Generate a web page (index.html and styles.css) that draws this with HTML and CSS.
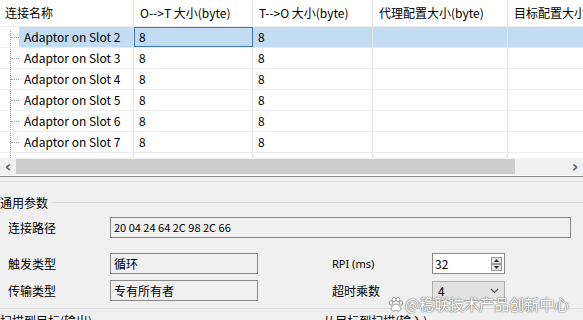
FILE: index.html
```html
<!DOCTYPE html>
<html lang="zh-CN">
<head>
  <meta charset="UTF-8">
  <title>连接</title>
  <link rel="stylesheet" href="styles.css">
</head>
<body>
  <div class="view">
    <div class="row head">
      <div class="c c1">连接名称</div>
      <div class="c c2">O--&gt;T 大小(byte)</div>
      <div class="c c3">T--&gt;O 大小(byte)</div>
      <div class="c c4">代理配置大小(byte)</div>
      <div class="c c5">目标配置大小(byte)</div>
    </div>
    <div class="body">
      <div class="row sel">
        <div class="c c1"><span class="twig"></span><span class="nm">Adaptor on Slot 2</span></div>
        <div class="c c2 focus">8</div>
        <div class="c c3">8</div>
        <div class="c c4"></div>
        <div class="c c5"></div>
      </div>
      <div class="row">
        <div class="c c1"><span class="twig"></span><span class="nm">Adaptor on Slot 3</span></div>
        <div class="c c2">8</div>
        <div class="c c3">8</div>
        <div class="c c4"></div>
        <div class="c c5"></div>
      </div>
      <div class="row">
        <div class="c c1"><span class="twig"></span><span class="nm">Adaptor on Slot 4</span></div>
        <div class="c c2">8</div>
        <div class="c c3">8</div>
        <div class="c c4"></div>
        <div class="c c5"></div>
      </div>
      <div class="row">
        <div class="c c1"><span class="twig"></span><span class="nm">Adaptor on Slot 5</span></div>
        <div class="c c2">8</div>
        <div class="c c3">8</div>
        <div class="c c4"></div>
        <div class="c c5"></div>
      </div>
      <div class="row">
        <div class="c c1"><span class="twig"></span><span class="nm">Adaptor on Slot 6</span></div>
        <div class="c c2">8</div>
        <div class="c c3">8</div>
        <div class="c c4"></div>
        <div class="c c5"></div>
      </div>
      <div class="row">
        <div class="c c1"><span class="twig"></span><span class="nm">Adaptor on Slot 7</span></div>
        <div class="c c2">8</div>
        <div class="c c3">8</div>
        <div class="c c4"></div>
        <div class="c c5"></div>
      </div>
      <div class="row tail">
        <div class="c c1"></div>
        <div class="c c2"></div>
        <div class="c c3"></div>
        <div class="c c4"></div>
        <div class="c c5"></div>
      </div>
    </div>
    <div class="hscroll">
      <span class="arr">&#x2039;</span>
      <div class="track"><div class="thumb"></div></div>
      <span class="arr">&#x203A;</span>
    </div>
  </div>

  <div class="panel">
    <div class="split"></div>
    <div class="legend"><span>通用参数</span><i></i></div>

    <div class="field wide">
      <span class="lbl">连接路径</span>
      <div class="box path">20 04 24 64 2C 98 2C 66</div>
    </div>

    <div class="field pair first">
      <span class="lbl">触发类型</span>
      <div class="box">循环</div>
      <span class="lbl2">RPI (ms)</span>
      <div class="spin">
        <span>32</span>
        <div class="btns">
          <svg width="11" height="14" viewBox="0 0 11 14">
            <rect x="0.5" y="0.5" width="10" height="6" fill="#e6e6e6" stroke="#9a9a9a"/>
            <rect x="0.5" y="7.5" width="10" height="6" fill="#e6e6e6" stroke="#9a9a9a"/>
            <path d="M3 5h5L5.5 2z" fill="#222"/>
            <path d="M3 9h5l-2.5 3z" fill="#222"/>
          </svg>
        </div>
      </div>
    </div>

    <div class="field pair">
      <span class="lbl">传输类型</span>
      <div class="box">专有所有者</div>
      <span class="lbl2">超时乘数</span>
      <div class="combo">
        <span>4</span>
        <svg width="9" height="6" viewBox="0 0 9 6"><path d="M1 1l3.5 3.5L8 1" fill="none" stroke="#555" stroke-width="1.2"/></svg>
      </div>
    </div>

    <div class="split low"></div>
    <div class="groups">
      <span>扫描到目标(输出)</span>
      <span class="g2">从目标到扫描(输入)</span>
    </div>

    <div class="mark">
      <svg width="16" height="16" viewBox="0 0 16 16">
        <g fill="#fff" stroke="#9a9a9a" stroke-width="1">
          <ellipse cx="3" cy="7" rx="1.8" ry="2.2"/>
          <ellipse cx="6" cy="3.5" rx="1.8" ry="2.2"/>
          <ellipse cx="10" cy="3.5" rx="1.8" ry="2.2"/>
          <ellipse cx="13" cy="7" rx="1.8" ry="2.2"/>
          <path d="M8 8c-2.5 0-5 3-5 5 0 1.5 1.5 2 2.5 2s1.5-.6 2.5-.6 1.5.6 2.5.6 2.5-.5 2.5-2c0-2-2.5-5-5-5z"/>
        </g>
      </svg>
      <span>@稳联技术产品创新中心</span>
    </div>
  </div>
</body>
</html>
```

FILE: styles.css
```css
body {
  margin: 0;
  width: 583px;
  height: 320px;
  overflow: hidden;
  font-family: "Noto Sans CJK SC", sans-serif;
  font-size: 12px;
  color: #000;
  background: #f0f0f0;
}

.view {
  background: #fff;
  border-bottom: 1px solid #8a8a8a;
  overflow: hidden;
}

.row {
  display: flex;
  height: 21px;
  box-sizing: border-box;
  border-bottom: 1px solid #ececec;
  line-height: 20px;
  white-space: nowrap;
}

.c {
  flex: none;
  box-sizing: border-box;
  border-right: 1px solid #e3e3e3;
  padding-left: 5px;
  overflow: hidden;
}

.c1 { width: 134px; }
.c2 { width: 119px; }
.c3 { width: 120px; }
.c4 { width: 135px; }
.c5 { width: 120px; }

.head {
  height: 27px;
  line-height: 26px;
  border-bottom: 1px solid #ececec;
}

.head .c { padding-left: 6px; }
.head .c1 { padding-left: 5px; }

.body {
  background: repeating-linear-gradient(to bottom, #9c9c9c 0 1px, transparent 1px 2px) 10px 4px / 1px 100% no-repeat;
}

.body .c1 {
  display: flex;
  padding-left: 0;
}

.twig {
  width: 8px;
  margin-left: 11px;
  align-self: center;
  border-top: 1px dotted #9c9c9c;
}

.nm {
  flex: 1;
  padding-left: 5px;
}

.sel .nm,
.sel .c2,
.sel .c3,
.sel .c4,
.sel .c5 {
  background: #c2dcf4;
}

.focus {
  border-right-color: #3f79b3;
  box-shadow: inset 1px 1px 0 #3f79b3, inset 0 -1px 0 #3f79b3;
}

.tail {
  height: 5px;
  border-bottom: none;
}

.hscroll {
  display: flex;
  align-items: center;
  height: 17px;
  margin-bottom: 1px;
  background: #f0f0f0;
}

.arr {
  width: 16px;
  text-align: center;
  font-family: "DejaVu Sans", sans-serif;
  font-size: 16px;
  font-weight: bold;
  line-height: 17px;
  color: #606060;
}

.track {
  flex: 1;
  height: 17px;
}

.thumb {
  width: 499px;
  height: 15px;
  margin-top: 1px;
  background: #cdcdcd;
}

.panel {
  position: relative;
  height: 143px;
}

.split {
  height: 1px;
  margin-top: 4px;
  background: #dcdcdc;
}

.legend {
  display: flex;
  align-items: center;
  height: 17px;
  margin-top: 12px;
  font-size: 12px;
}

.legend i {
  flex: 1;
  height: 1px;
  margin-left: 4px;
  background: #dcdcdc;
}

.field {
  display: flex;
  align-items: center;
  height: 21px;
  padding-left: 8px;
}

.wide { margin-top: 6px; }
.pair { margin-top: 6px; }
.pair.first { margin-top: 15px; }

.lbl {
  width: 102px;
  font-size: 12px;
}

.box {
  box-sizing: border-box;
  height: 21px;
  width: 148px;
  padding-left: 3px;
  border: 1px solid #8a8a8a;
  background: #f0f0f0;
  line-height: 19px;
}

.box.path {
  width: 461px;
  font-size: 11px;
}

.lbl2 {
  width: 100px;
  margin-left: 74px;
  font-size: 12px;
}

.first .lbl2 {
  font-family: "Noto Sans", sans-serif;
  font-size: 11px;
}

.spin {
  display: flex;
  align-items: center;
  justify-content: space-between;
  box-sizing: border-box;
  width: 73px;
  height: 21px;
  padding: 0 2px;
  border: 1px solid #8a8a8a;
  background: #fff;
}

.btns { display: flex; }

.combo {
  display: flex;
  align-items: center;
  justify-content: space-between;
  box-sizing: border-box;
  width: 73px;
  height: 20px;
  padding: 0 5px;
  border: 1px solid #adadad;
  background: #e2e2e2;
}

.split.low {
  margin-top: 7px;
}

.groups {
  display: flex;
  margin-top: 4px;
  line-height: 16px;
}

.groups .g2 {
  margin-left: 231px;
}

.mark {
  position: absolute;
  left: 388px;
  top: 112px;
  display: flex;
  align-items: center;
  gap: 1px;
  font-size: 15px;
  color: #fff;
  text-shadow: 0 0 1px #777, 0 0 1px #777, 0 0 2px #999;
}
```
